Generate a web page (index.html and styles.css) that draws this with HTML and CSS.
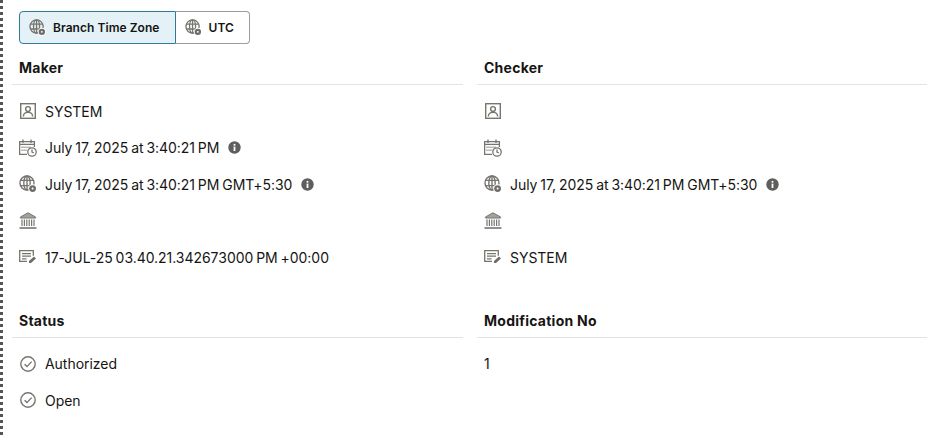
FILE: index.html
```html
<!DOCTYPE html>
<html lang="en">
<head>
<meta charset="utf-8">
<title>Audit details</title>
<link rel="stylesheet" href="styles.css">
</head>
<body>
<svg class="defs" width="0" height="0" aria-hidden="true">
  <defs>
    <symbol id="i-globe" viewBox="0 0 18 18">
      <g fill="none" stroke="#77756f" stroke-width="1.4">
        <circle cx="8" cy="8" r="7"/>
        <ellipse cx="8" cy="8" rx="3.2" ry="7"/>
        <path d="M1.4 5.4h13.2M1.4 10.6h13.2M8 1v14"/>
      </g>
      <circle cx="13.6" cy="13.6" r="4.4" fill="#fff"/>
      <circle cx="13.6" cy="13.6" r="3.4" fill="#6f6e6c"/>
      <circle cx="13.6" cy="13.6" r="1" fill="#fff"/>
    </symbol>
    <symbol id="i-user" viewBox="0 0 16 16">
      <g fill="none" stroke="#77756f" stroke-width="1.4">
        <rect x=".7" y=".7" width="14.6" height="14.6"/>
        <circle cx="8" cy="6" r="2.4"/>
        <path d="M3.4 13.4c0-3 2-4 4.6-4s4.6 1 4.6 4"/>
      </g>
    </symbol>
    <symbol id="i-cal" viewBox="0 0 18 18">
      <g fill="none" stroke="#77756f" stroke-width="1.3">
        <path d="M8 15.4H.6V2.6h14.8V8"/>
        <path d="M4 .5v3.5M12 .5v3.5M.6 5.4h14.8"/>
        <path d="M3 7.5v1.5M5 7.5v1.5M7 7.5v1.5M9 7.5v1.5M11 7.5v1.5M3 10.5v1.5M5 10.5v1.5M7 10.5v1.5" stroke-width="1"/>
        <circle cx="13" cy="13" r="4.2" fill="#fff" stroke-width="1.3"/>
        <path d="M13 10.6V13l1.8 1"/>
      </g>
    </symbol>
    <symbol id="i-bank" viewBox="0 0 18 18">
      <path d="M9 .8 16.6 5v1H1.4V5z" fill="#a3a19d" stroke="#77756f" stroke-width="1"/>
      <path d="M3 7.5v6.5M5.4 7.5v6.5M7.8 7.5v6.5M10.2 7.5v6.5M12.6 7.5v6.5M15 7.5v6.5" stroke="#77756f" stroke-width="1.2"/>
      <path d="M.5 16h17" stroke="#77756f" stroke-width="1.6"/>
    </symbol>
    <symbol id="i-note" viewBox="0 0 17 14">
      <g fill="none" stroke="#77756f" stroke-width="1.3">
        <path d="M8 11.4H.7V.7h13.6v5"/>
        <path d="M3 3.6h9M3 6.2h9M3 8.8h4.5"/>
      </g>
      <path d="M10 13v-2l5-4.4 2 2-5 4.4z" fill="#6f6e6c"/>
    </symbol>
    <symbol id="i-check" viewBox="0 0 16 16">
      <g fill="none" stroke="#77756f" stroke-width="1.4">
        <circle cx="8" cy="8" r="7.2"/>
        <path d="m4.6 8.2 2.4 2.4 4.6-5"/>
      </g>
    </symbol>
    <symbol id="i-info" viewBox="0 0 13 13">
      <circle cx="6.5" cy="6.5" r="6.2" fill="#5f5e5c"/>
      <rect x="5.6" y="5.6" width="1.8" height="4.4" fill="#fff"/>
      <rect x="5.6" y="2.9" width="1.8" height="1.8" fill="#fff"/>
    </symbol>
  </defs>
</svg>
<main class="page">
  <div class="segmented">
    <button class="seg seg-on"><svg class="ic-seg"><use href="#i-globe"/></svg>Branch Time Zone</button>
    <button class="seg"><svg class="ic-seg"><use href="#i-globe"/></svg>UTC</button>
  </div>
  <div class="grid">
    <section>
      <h2 class="head">Maker</h2>
      <div class="row"><svg class="ic ic-user"><use href="#i-user"/></svg>SYSTEM</div>
      <div class="row"><svg class="ic"><use href="#i-cal"/></svg>July 17, 2025 at 3:40:21 PM<svg class="info"><use href="#i-info"/></svg></div>
      <div class="row"><svg class="ic"><use href="#i-globe"/></svg>July 17, 2025 at 3:40:21 PM GMT+5:30<svg class="info"><use href="#i-info"/></svg></div>
      <div class="row"><svg class="ic"><use href="#i-bank"/></svg></div>
      <div class="row"><svg class="ic ic-note"><use href="#i-note"/></svg>17-JUL-25 03.40.21.342673000 PM +00:00</div>
    </section>
    <section>
      <h2 class="head">Checker</h2>
      <div class="row"><svg class="ic ic-user"><use href="#i-user"/></svg></div>
      <div class="row"><svg class="ic"><use href="#i-cal"/></svg></div>
      <div class="row"><svg class="ic"><use href="#i-globe"/></svg>July 17, 2025 at 3:40:21 PM GMT+5:30<svg class="info"><use href="#i-info"/></svg></div>
      <div class="row"><svg class="ic"><use href="#i-bank"/></svg></div>
      <div class="row"><svg class="ic ic-note"><use href="#i-note"/></svg>SYSTEM</div>
    </section>
    <section class="lower">
      <h2 class="head">Status</h2>
      <div class="row"><svg class="ic ic-user"><use href="#i-check"/></svg>Authorized</div>
      <div class="row"><svg class="ic ic-user"><use href="#i-check"/></svg>Open</div>
    </section>
    <section class="lower">
      <h2 class="head">Modification No</h2>
      <div class="row">1</div>
    </section>
  </div>
</main>
</body>
</html>
```
FILE: styles.css
```css
html, body { margin: 0; padding: 0; background: #fff; }
body {
  width: 945px;
  height: 435px;
  overflow: hidden;
  font-family: Inter, sans-serif;
  font-size: 14px;
  letter-spacing: -0.04px;
  word-spacing: -1px;
  color: #161513;
  box-sizing: border-box;
  border-left: 3px dotted #555;
}
.defs { position: absolute; }
.page { padding: 11px 0 0 9px; width: 916px; }
.segmented { display: flex; margin-left: 7px; height: 33px; }
.seg {
  display: flex;
  align-items: center;
  font: 600 12px Inter, sans-serif;
  letter-spacing: 0.05px;
  word-spacing: 0;
  color: #161513;
  background: #fff;
  border: 1px solid #9e9c99;
  border-left: 0;
  border-radius: 0 4px 4px 0;
  padding: 0 15px 0 9px;
  gap: 7px;
}
.seg-on {
  background: #e4f1f7;
  border: 1px solid #2f7a96;
  border-radius: 4px 0 0 4px;
  padding: 0 15px 0 9px;
}
.ic-seg { width: 17px; height: 17px; }
.grid {
  display: grid;
  grid-template-columns: 451px 450px;
  column-gap: 14px;
}
.head {
  margin: 0;
  padding: 0 7px 8px;
  height: 41px;
  box-sizing: border-box;
  display: flex;
  align-items: flex-end;
  font-size: 14px;
  font-weight: 700;
  letter-spacing: 0.25px;
  word-spacing: 0;
  border-bottom: 1px solid #e4e3e1;
}
.row {
  display: flex;
  align-items: center;
  height: 36.6px;
  padding-left: 7px;
}
.head + .row { margin-top: 7.8px; }
.ic { width: 18px; height: 18px; margin-right: 8px; flex: none; }
.ic-user { width: 16px; height: 16px; margin: 0 9px 0 1px; }
.ic-note { width: 17px; height: 14px; margin-right: 9px; }
.info { width: 13px; height: 13px; margin-left: 9px; flex: none; }
.lower { margin-top: 21px; }
```
